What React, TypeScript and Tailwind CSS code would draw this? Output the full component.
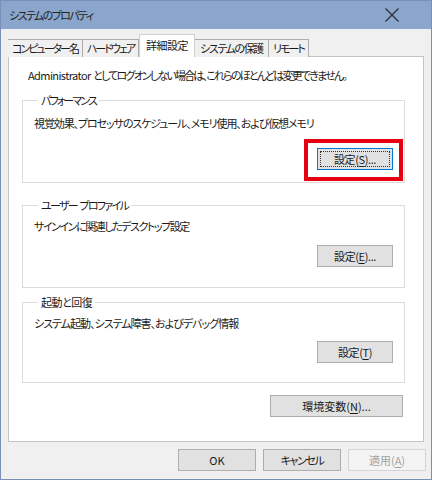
import React from "react";

const font = {
  fontFamily: '"Noto Sans CJK JP", "Noto Sans", sans-serif',
};

function Btn({
  children,
  w,
  focused,
  disabled,
}: {
  children: React.ReactNode;
  w: string;
  focused?: boolean;
  disabled?: boolean;
}) {
  const base =
    "h-[22px] shrink-0 flex items-center justify-center text-[11px] leading-none border whitespace-nowrap " + w;
  const look = disabled
    ? " bg-[#f4f4f4] border-[#d4d4d4] text-[#a3a3a3]"
    : focused
    ? " bg-[#e1e1e1] border-[#0078d7] text-[#1a1a1a] outline-1 outline-dotted outline-[#333] outline-offset-[-4px]"
    : " bg-[#e1e1e1] border-[#adadad] text-[#1a1a1a]";
  return <div className={base + look}>{children}</div>;
}

function U({ children }: { children: React.ReactNode }) {
  return <span className="underline underline-offset-2">{children}</span>;
}

const tab =
  "h-[18px] border border-b-0 border-l-0 border-[#adadad] bg-[#f0f0f0] flex items-center justify-center text-[11px] leading-none whitespace-nowrap";

export default function App() {
  return (
    <div
      className="w-[432px] h-[480px] flex flex-col bg-[#f0f0f0] border border-[#7890b5] text-[#1a1a1a] [font-feature-settings:'palt'] overflow-hidden"
      style={font}
    >
      {/* title bar */}
      <div className="h-[28px] shrink-0 bg-[#8aa6cd] flex items-center justify-between pl-[8px] pr-[32px]">
        <span className="text-[11px] leading-none text-[#222] tracking-[-1.6px]">システムのプロパティ</span>
        <svg width="14" height="14" viewBox="0 0 14 14">
          <path d="M0.5 0.5 L13.5 13.5 M13.5 0.5 L0.5 13.5" stroke="#2b2b2b" strokeWidth="1.1" />
        </svg>
      </div>

      {/* tabs */}
      <div className="pl-[7px] pr-[7px] pt-[5px] flex flex-col">
        <div className="flex items-end h-[23px] relative z-10 mb-[-1px]">
          <div className={tab + " w-[75px] border-l tracking-[-2px]"}>コンピューター名</div>
          <div className={tab + " w-[56px] tracking-[-2px]"}>ハードウェア</div>
          <div className="h-[23px] w-[56px] border border-b-0 border-[#d0d0d0] bg-white flex items-center justify-center text-[11px] leading-none pb-[2px] whitespace-nowrap tracking-[-0.5px]">
            詳細設定
          </div>
          <div className={tab + " w-[74px] tracking-[-1.4px]"}>システムの保護</div>
          <div className={tab + " w-[40px] tracking-[-2px]"}>リモート</div>
        </div>

        {/* panel */}
        <div className="h-[386px] bg-white border border-[#c4c4c4] pl-[13px] pr-[18px] flex flex-col">
          <div className="pl-[6px] pt-[10px] text-[11px] leading-[16px] whitespace-nowrap tracking-[-1.8px]">
            <span className="tracking-[-0.6px]">Administrator</span>
            <span className="tracking-normal"> </span>
            としてログオンしない場合は、これらのほとんどは変更できません。
          </div>

          {/* group 1 */}
          <fieldset className="mt-[9px] border border-[#dcdcdc] pl-[11px] pr-[11px] pb-[12px]">
            <legend className="ml-[4px] px-[3px] text-[11px] leading-[16px] tracking-[-1.9px]">パフォーマンス</legend>
            <div className="pt-[7px] text-[11px] leading-[16px] whitespace-nowrap tracking-[-1.1px]">
              視覚効果、プロセッサのスケジュール、メモリ使用、および仮想メモリ
            </div>
            <div className="flex justify-end mt-[17px]">
              <div className="relative">
                <div className="absolute left-[-13px] right-[-10px] top-[-9px] bottom-[-11px] border-[4px] border-[#e60012]" />
                <Btn w="w-[76px] tracking-[-0.4px]" focused>
                  設定(<U>S</U>)...
                </Btn>
              </div>
            </div>
          </fieldset>

          {/* group 2 */}
          <fieldset className="mt-[14px] border border-[#dcdcdc] pl-[11px] pr-[11px] pb-[20px]">
            <legend className="ml-[4px] px-[3px] text-[11px] leading-[16px] tracking-[-1.7px]">
              ユーザー<span className="tracking-normal"> </span>プロファイル
            </legend>
            <div className="pt-[5px] text-[11px] leading-[16px] whitespace-nowrap tracking-[-1.45px]">
              サインインに関連したデスクトップ設定
            </div>
            <div className="flex justify-end mt-[11px]">
              <Btn w="w-[76px] tracking-[-0.4px]">
                設定(<U>E</U>)...
              </Btn>
            </div>
          </fieldset>

          {/* group 3 */}
          <fieldset className="mt-[6px] border border-[#dcdcdc] pl-[11px] pr-[11px] pb-[19px]">
            <legend className="ml-[4px] px-[3px] text-[11px] leading-[16px] tracking-[-0.5px]">起動と回復</legend>
            <div className="pt-[5px] text-[11px] leading-[16px] whitespace-nowrap tracking-[-1px]">
              システム起動、システム障害、およびデバッグ情報
            </div>
            <div className="flex justify-end mt-[10px]">
              <Btn w="w-[76px] tracking-[-0.4px]">
                設定(<U>T</U>)
              </Btn>
            </div>
          </fieldset>

          <div className="flex justify-end mt-[12px] mr-[2px]">
            <Btn w="w-[133px]">
              環境変数(<U>N</U>)...
            </Btn>
          </div>
        </div>
      </div>

      {/* footer */}
      <div className="flex justify-end gap-[7px] pr-[5px] pt-[7px]">
        <Btn w="w-[78px]">OK</Btn>
        <Btn w="w-[78px] tracking-[-1.4px]">キャンセル</Btn>
        <Btn w="w-[78px]" disabled>
          適用(<U>A</U>)
        </Btn>
      </div>
    </div>
  );
}
